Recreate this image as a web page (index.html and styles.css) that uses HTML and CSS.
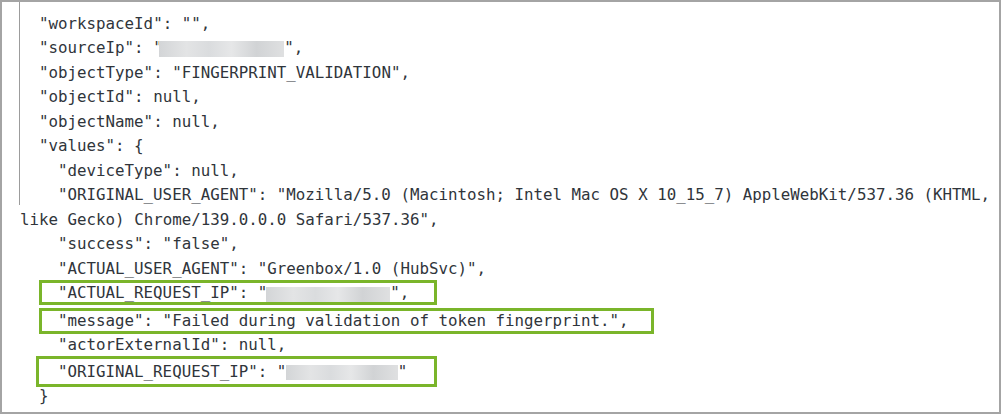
FILE: index.html
```html
<!DOCTYPE html>
<html>
<head>
<meta charset="utf-8">
<link rel="stylesheet" href="styles.css">
</head>
<body>
<div class="frame">
  <div class="code">
    <div class="guide">
      <div class="ln in1 clip">"actorName": 0,</div>
      <div class="ln in1">"workspaceId": "",</div>
      <div class="ln in1">"sourceIp": "<span class="redact r1"></span>",</div>
      <div class="ln in1">"objectType": "FINGERPRINT_VALIDATION",</div>
      <div class="ln in1">"objectId": null,</div>
      <div class="ln in1">"objectName": null,</div>
      <div class="ln in1">"values": {</div>
      <div class="ln in2">"deviceType": null,</div>
      <div class="ln in2">"ORIGINAL_USER_AGENT": "Mozilla/5.0 (Macintosh; Intel Mac OS X 10_15_7) AppleWebKit/537.36 (KHTML,</div>
    </div>
    <div class="ln">like Gecko) Chrome/139.0.0.0 Safari/537.36",</div>
    <div class="ln in2">"success": "false",</div>
    <div class="ln in2">"ACTUAL_USER_AGENT": "Greenbox/1.0 (HubSvc)",</div>
    <div class="hl hl1">"ACTUAL_REQUEST_IP": "<span class="redact r2"></span>",</div>
    <div class="hl hl2">"message": "Failed during validation of token fingerprint.",</div>
    <div class="ln in2 ln-short">"actorExternalId": null,</div>
    <div class="hl hl3">"ORIGINAL_REQUEST_IP": "<span class="redact r3"></span>"</div>
    <div class="ln in1 ln-end">}</div>
  </div>
</div>
</body>
</html>
```

FILE: styles.css
```css
html, body {
  margin: 0;
  padding: 0;
  background: #ffffff;
}

.frame {
  box-sizing: border-box;
  width: 1001px;
  height: 414px;
  border: 2px solid #a4a4a4;
  background: #ffffff;
  overflow: hidden;
}

.code {
  margin-top: -15px;
  padding-left: 18px;
  font-family: "DejaVu Sans Mono", "Liberation Mono", monospace;
  font-size: 15.8px;
  color: #30353b;
}

.guide {
  margin-left: -1px;
  border-left: 1px solid #9c9c9c;
}

.ln, .hl {
  white-space: pre;
}

.ln {
  height: 24.5px;
  line-height: 24.5px;
}

.ln.clip {
  line-height: 10px;
}

.guide .ln:last-child {
  height: 21.5px;
  line-height: 24.5px;
  overflow: visible;
}

.guide + .ln {
  margin-top: 3px;
}

.in1 { padding-left: 19px; }
.in2 { padding-left: 38px; }

.ln-short {
  height: 22px;
  line-height: 22px;
}

.ln-end {
  height: 18px;
  line-height: 18px;
}

.hl {
  box-sizing: border-box;
  border: 3px solid #7ab52a;
}

.hl1 {
  margin-top: -1px;
  margin-left: 19px;
  width: 398px;
  height: 25px;
  line-height: 19px;
  padding-left: 16px;
}

.hl2 {
  margin-top: 3px;
  margin-left: 19px;
  width: 615px;
  height: 26px;
  line-height: 20px;
  padding-left: 16px;
}

.hl3 {
  margin-left: 16px;
  width: 401px;
  height: 31px;
  line-height: 25px;
  padding-left: 19px;
}

.redact {
  display: inline-block;
  height: 16px;
  vertical-align: middle;
  background: linear-gradient(90deg, #d3d5d7 0%, #e3e4e5 22%, #dadcde 40%, #e6e7e8 58%, #d1d3d5 78%, #dfe0e1 100%);
}

.r1 {
  width: 125px;
  margin-left: -3.5px;
}

.r2 {
  width: 124px;
  margin-left: -1px;
  height: 15px;
  vertical-align: -4px;
}

.r3 {
  width: 112px;
  margin-left: -0.5px;
  height: 15px;
}
```
